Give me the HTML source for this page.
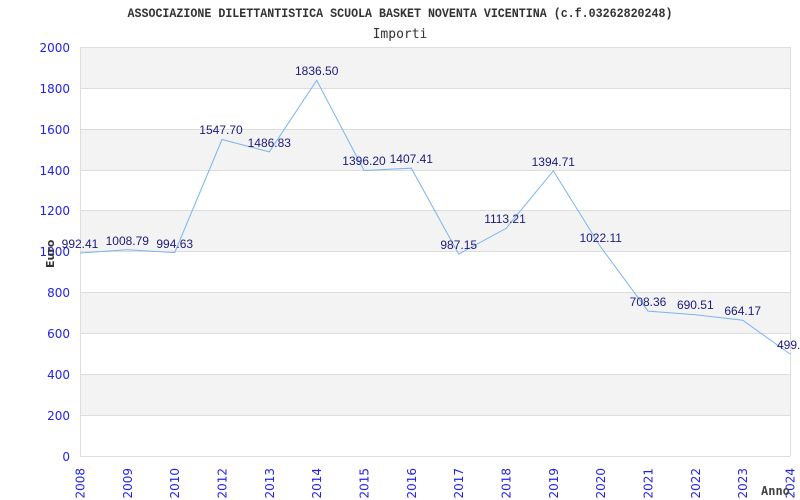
<!DOCTYPE html>
<html><head><meta charset="utf-8"><style>html,body{margin:0;padding:0;background:#fff}svg{display:block}</style></head><body>
<svg width="800" height="500" xmlns="http://www.w3.org/2000/svg">
<rect width="800" height="500" fill="#fff"/>
<text x="400" y="17" text-anchor="middle" font-family="Liberation Mono, monospace" font-weight="bold" font-size="12.5" fill="#333" textLength="545" lengthAdjust="spacingAndGlyphs">ASSOCIAZIONE DILETTANTISTICA SCUOLA BASKET NOVENTA VICENTINA (c.f.03262820248)</text>
<text x="400" y="38" text-anchor="middle" font-family="DejaVu Sans Mono, monospace" font-size="13" fill="#333">Importi</text>
<g fill="#f3f3f3">
<rect x="80" y="47" width="710" height="41"/>
<rect x="80" y="129" width="710" height="41"/>
<rect x="80" y="211" width="710" height="40"/>
<rect x="80" y="292" width="710" height="41"/>
<rect x="80" y="374" width="710" height="41"/>
</g>
<g stroke="#ddd" stroke-width="1">
<line x1="80" y1="47.5" x2="790" y2="47.5"/>
<line x1="80" y1="88.5" x2="790" y2="88.5"/>
<line x1="80" y1="129.5" x2="790" y2="129.5"/>
<line x1="80" y1="170.5" x2="790" y2="170.5"/>
<line x1="80" y1="210.5" x2="790" y2="210.5"/>
<line x1="80" y1="251.5" x2="790" y2="251.5"/>
<line x1="80" y1="292.5" x2="790" y2="292.5"/>
<line x1="80" y1="333.5" x2="790" y2="333.5"/>
<line x1="80" y1="374.5" x2="790" y2="374.5"/>
<line x1="80" y1="415.5" x2="790" y2="415.5"/>
<line x1="80" y1="456.5" x2="790" y2="456.5"/>
<line x1="80.5" y1="47" x2="80.5" y2="456"/>
<line x1="790.5" y1="47" x2="790.5" y2="456"/>
</g>
<g font-family="DejaVu Sans, sans-serif" font-size="12" fill="#2222ee" text-anchor="end">
<text x="70" y="52">2000</text><text x="70" y="93">1800</text><text x="70" y="134">1600</text><text x="70" y="175">1400</text><text x="70" y="215">1200</text><text x="70" y="256">1000</text><text x="70" y="297">800</text><text x="70" y="338">600</text><text x="70" y="379">400</text><text x="70" y="420">200</text><text x="70" y="461">0</text>
</g>
<text transform="translate(54,268) rotate(-90)" font-family="DejaVu Sans, sans-serif" font-weight="bold" font-size="11" fill="#333">Euro</text>
<polyline fill="none" stroke="#7ab4f0" stroke-width="1" points="80,253 127.3,249.7 174.7,252.6 222,139.5 269.3,151.9 316.7,80.4 364,170.5 411.3,168.2 458.7,254.1 506,228.4 553.3,170.8 600.7,247 648,311.1 695.3,314.8 742.7,320.2 790,354"/>
<g font-family="Liberation Sans, Arial, sans-serif" font-size="12" fill="#1a1a80" text-anchor="middle">
<text x="80" y="248">992.41</text><text x="127.3" y="245">1008.79</text><text x="174.7" y="248">994.63</text><text x="221" y="134">1547.70</text><text x="269.3" y="147">1486.83</text><text x="316.7" y="75">1836.50</text><text x="364" y="165">1396.20</text><text x="411.3" y="163">1407.41</text><text x="458.7" y="249">987.15</text><text x="505" y="223">1113.21</text><text x="553.3" y="166">1394.71</text><text x="600.7" y="242">1022.11</text><text x="648" y="306">708.36</text><text x="695.3" y="309">690.51</text><text x="742.7" y="315">664.17</text><text x="792" y="349">499.0</text>
</g>
<g font-family="DejaVu Sans, sans-serif" font-size="12" fill="#2222ee" text-anchor="end">
<text transform="translate(84.5,468) rotate(-90)">2008</text>
<text transform="translate(131.8,468) rotate(-90)">2009</text>
<text transform="translate(179.2,468) rotate(-90)">2010</text>
<text transform="translate(226.5,468) rotate(-90)">2012</text>
<text transform="translate(273.8,468) rotate(-90)">2013</text>
<text transform="translate(321.2,468) rotate(-90)">2014</text>
<text transform="translate(368.5,468) rotate(-90)">2015</text>
<text transform="translate(415.8,468) rotate(-90)">2016</text>
<text transform="translate(463.2,468) rotate(-90)">2017</text>
<text transform="translate(510.5,468) rotate(-90)">2018</text>
<text transform="translate(557.8,468) rotate(-90)">2019</text>
<text transform="translate(605.2,468) rotate(-90)">2020</text>
<text transform="translate(652.5,468) rotate(-90)">2021</text>
<text transform="translate(699.8,468) rotate(-90)">2022</text>
<text transform="translate(747.2,468) rotate(-90)">2023</text>
<text transform="translate(794.5,468) rotate(-90)">2024</text>
</g>
<text x="761" y="495" font-family="DejaVu Sans Mono, monospace" font-weight="bold" font-size="12" fill="#444">Anno</text>
</svg>
</body></html>
